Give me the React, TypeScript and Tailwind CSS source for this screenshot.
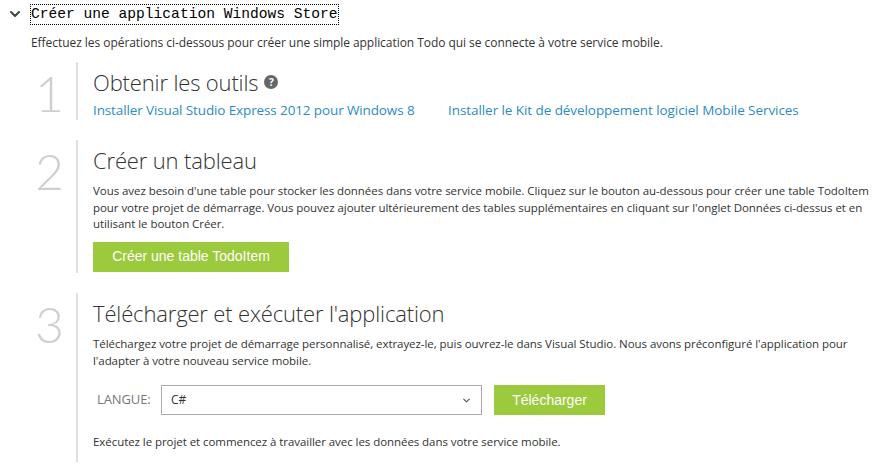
import React from 'react';
import { ChevronDown } from 'lucide-react';

const font = "font-['Open_Sans','Noto_Sans',sans-serif]";
const body = 'text-[11.5px] leading-[16.5px] tracking-[-0.06px]';

const Step = ({ n, title, className, children }: { n: string; title: React.ReactNode; className: string; children: React.ReactNode }) => (
  <div className={`flex ${className}`}>
    <div className="w-[64px] pt-[1px] text-right text-[50px] leading-[60px] font-light text-[#cfcfcf] font-['Lato',sans-serif]">{n}</div>
    <div className="ml-[12px] w-[2px] bg-[#e0e0e0]" />
    <div className="pl-[15px] flex-1">
      <h2 className="text-[22px] leading-[30px] font-light tracking-[-0.15px] text-[#333] pt-[5px]">{title}</h2>
      {children}
    </div>
  </div>
);

const GreenButton = ({ children, className }: { children: React.ReactNode; className: string }) => (
  <button className={`bg-[#9bca3c] text-white text-[14px] font-['Liberation_Sans',sans-serif] ${className}`}>{children}</button>
);

export default function App() {
  return (
    <div className={`w-[886px] h-[466px] overflow-hidden bg-white text-[#333] ${font}`}>
      <div className="flex items-center h-[22px] mt-[3px]">
        <ChevronDown className="ml-[7px] w-[16px] h-[16px] text-[#444]" strokeWidth={3} />
        <span className="ml-[8px] h-[19px] leading-[18px] outline-1 outline-dotted outline-black text-[14.6px] text-black font-['Liberation_Mono',monospace]">
          Créer une application Windows Store
        </span>
      </div>
      <p className="ml-[31px] mt-[10px] text-[12px] leading-[16px] tracking-[-0.05px]">
        Effectuez les opérations ci-dessous pour créer une simple application Todo qui se connecte à votre service mobile.
      </p>
      <Step n="1" className="mt-[11px] h-[58px]" title={
        <span className="flex items-center">
          Obtenir les outils
          <span className="ml-[6px] w-[14px] h-[14px] rounded-full bg-[#666] text-white text-[10px] leading-[14px] font-bold text-center tracking-normal">?</span>
        </span>
      }>
        <div className="flex text-[13.5px] leading-[18px] text-[#2c8cc4] mt-[4px]">
          <a className="w-[355px] tracking-[-0.12px]">Installer Visual Studio Express 2012 pour Windows 8</a>
          <a className="tracking-[-0.07px]">Installer le Kit de développement logiciel Mobile Services</a>
        </div>
      </Step>
      <Step n="2" className="mt-[20px] h-[133px]" title="Créer un tableau">
        <p className={`mt-[8px] w-[790px] ${body}`}>
          Vous avez besoin d'une table pour stocker les données dans votre service mobile. Cliquez sur le bouton au-dessous pour créer une table TodoItem pour votre projet de démarrage. Vous pouvez ajouter ultérieurement des tables supplémentaires en cliquant sur l'onglet Données ci-dessus et en utilisant le bouton Créer.
        </p>
        <GreenButton className="mt-[9px] w-[196px] h-[30px]">Créer une table TodoItem</GreenButton>
      </Step>
      <Step n="3" className="mt-[20px] h-[169px]" title="Télécharger et exécuter l'application">
        <p className={`mt-[8px] w-[770px] ${body}`}>
          Téléchargez votre projet de démarrage personnalisé, extrayez-le, puis ouvrez-le dans Visual Studio. Nous avons préconfiguré l'application pour l'adapter à votre nouveau service mobile.
        </p>
        <div className="flex items-center mt-[16px]">
          <span className="ml-[4px] w-[64px] text-[13px] text-[#777] tracking-[-0.1px]">LANGUE:</span>
          <div className="flex items-center justify-between w-[321px] h-[30px] border border-[#aaa] pl-[9px] pr-[9px] text-[12px]">
            C#
            <ChevronDown className="w-[11px] h-[11px] text-[#555]" strokeWidth={2.5} />
          </div>
          <GreenButton className="ml-[12px] w-[111px] h-[30px]">Télécharger</GreenButton>
        </div>
        <p className={`mt-[19px] ${body}`}>
          Exécutez le projet et commencez à travailler avec les données dans votre service mobile.
        </p>
      </Step>
    </div>
  );
}
